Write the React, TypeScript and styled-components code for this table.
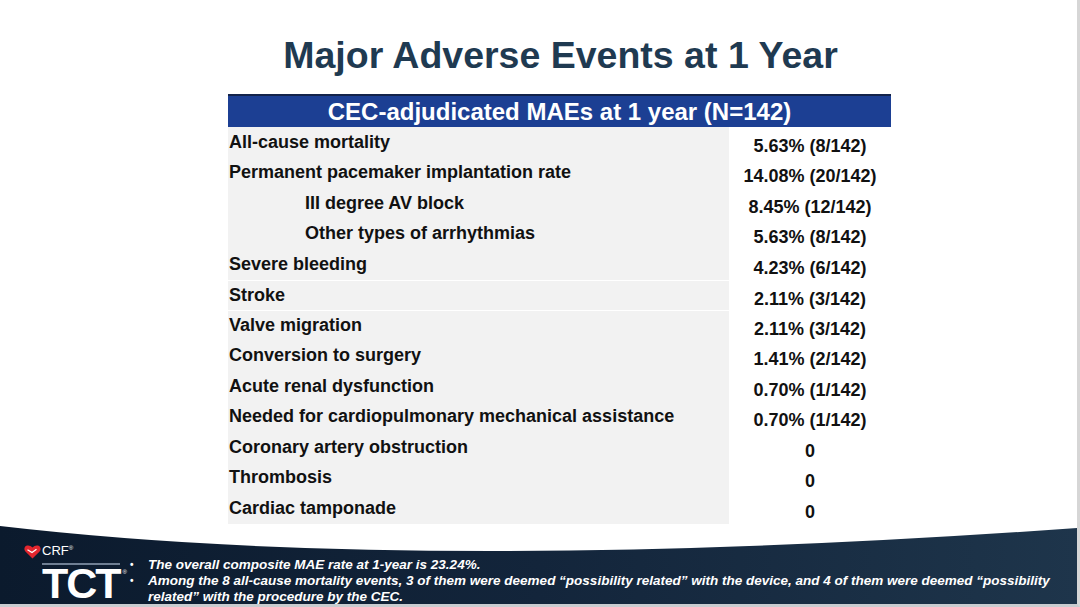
import React from 'react';
import styled, { createGlobalStyle } from 'styled-components';

const GlobalStyle = createGlobalStyle`
  html, body {
    margin: 0;
    padding: 0;
    background: #ffffff;
  }
  body {
    font-family: "Liberation Sans", Arial, sans-serif;
  }
`;

const rows = [
  { label: 'All-cause mortality', value: '5.63% (8/142)' },
  { label: 'Permanent pacemaker implantation rate', value: '14.08% (20/142)' },
  { label: 'III degree AV block', value: '8.45% (12/142)', indent: true },
  { label: 'Other types of arrhythmias', value: '5.63% (8/142)', indent: true },
  { label: 'Severe bleeding', value: '4.23% (6/142)' },
  { label: 'Stroke', value: '2.11% (3/142)', divider: true },
  { label: 'Valve migration', value: '2.11% (3/142)', divider: true },
  { label: 'Conversion to surgery', value: '1.41% (2/142)' },
  { label: 'Acute renal dysfunction', value: '0.70% (1/142)' },
  { label: 'Needed for cardiopulmonary mechanical assistance', value: '0.70% (1/142)' },
  { label: 'Coronary artery obstruction', value: '0' },
  { label: 'Thrombosis', value: '0' },
  { label: 'Cardiac tamponade', value: '0' },
];

const App = () => {
  return (
    <>
      <GlobalStyle />
      <Slide>
        <Title>Major Adverse Events at 1 Year</Title>
        <Table>
          <TableHeader>CEC-adjudicated MAEs at 1 year (N=142)</TableHeader>
          {rows.map((row) => (
            <Row key={row.label} $divider={row.divider}>
              <Label $indent={row.indent}>{row.label}</Label>
              <Value>{row.value}</Value>
            </Row>
          ))}
        </Table>
        <Footer>
          <Curve viewBox="0 0 1077 81" preserveAspectRatio="none">
            <path d="M0,0 L0,2 Q420,51 1077,4 L1077,0 Z" fill="#ffffff" />
          </Curve>
          <Logo>
            <CrfLine>
              <svg width="17" height="14" viewBox="0 0 17 14">
                <path
                  d="M8.5,13.5 L1.4,6.6 C-0.4,4.8 0.2,1.4 3,0.6 C5,0.1 7,1 8.5,2.6 C10,1 12,0.1 14,0.6 C16.8,1.4 17.4,4.8 15.6,6.6 Z"
                  fill="#e3262e"
                />
                <path d="M3.5,4.8 L8,7.5 L12.5,4.3" stroke="#ffffff" strokeWidth="1.3" fill="none" />
              </svg>
              <CrfText>
                CRF<Reg>®</Reg>
              </CrfText>
            </CrfLine>
            <TctLine>
              <TctText>TCT</TctText>
              <TctReg>®</TctReg>
            </TctLine>
          </Logo>
          <Notes>
            <Note>The overall composite MAE rate at 1-year is 23.24%.</Note>
            <Note>
              Among the 8 all-cause mortality events, 3 of them were deemed “possibility related” with the
              device, and 4 of them were deemed “possibility related” with the procedure by the CEC.
            </Note>
          </Notes>
        </Footer>
      </Slide>
    </>
  );
};

export default App;

// Styled components
const Slide = styled.div`
  width: 1077px;
  height: 604px;
  border-right: 3px solid #d6d6d6;
  border-bottom: 3px solid #c9ccd0;
  background: #ffffff;
  display: flex;
  flex-direction: column;
  overflow: hidden;
`;

const Title = styled.h1`
  margin: 34px 0 0;
  padding-left: 44px;
  text-align: center;
  font-size: 37.5px;
  line-height: 42px;
  font-weight: 700;
  color: #1f3a51;
`;

const Table = styled.div`
  margin: 18px 0 0 228px;
  width: 663px;
  display: flex;
  flex-direction: column;
`;

const TableHeader = styled.div`
  height: 30px;
  border-top: 2px solid #13234a;
  background: #1c3f93;
  color: #ffffff;
  font-size: 24px;
  font-weight: 700;
  display: flex;
  align-items: center;
  justify-content: center;
  padding-top: 1px;
`;

const Row = styled.div<{ $divider?: boolean }>`
  display: grid;
  grid-template-columns: 501px 1fr;
  height: 30.5px;
  box-sizing: border-box;
  border-top: ${(p) => (p.$divider ? '1px solid #ffffff' : '0')};
`;

const Label = styled.div<{ $indent?: boolean }>`
  background: #f2f2f2;
  font-size: 18px;
  font-weight: 700;
  color: #111111;
  padding-left: ${(p) => (p.$indent ? '77px' : '1px')};
  display: flex;
  align-items: center;
  white-space: nowrap;
`;

const Value = styled.div`
  font-size: 18px;
  font-weight: 700;
  color: #111111;
  display: flex;
  align-items: center;
  justify-content: center;
  padding-top: 8px;
  white-space: nowrap;
`;

const Footer = styled.div`
  position: relative;
  flex-shrink: 0;
  margin-top: auto;
  width: 100%;
  height: 81px;
  background: linear-gradient(90deg, #0b1a2d 0%, #13253b 50%, #1e354b 100%);
  display: flex;
  align-items: flex-start;
  padding: 17px 0 0 24px;
  box-sizing: border-box;
`;

const Curve = styled.svg`
  position: absolute;
  left: 0;
  top: 0;
  width: 100%;
  height: 81px;
`;

const Logo = styled.div`
  position: relative;
  width: 94px;
  margin-top: 3px;
  display: flex;
  flex-direction: column;
  align-items: flex-start;
`;

const CrfLine = styled.div`
  display: flex;
  align-items: center;
  gap: 1px;
  height: 16px;
`;

const CrfText = styled.span`
  color: #ffffff;
  font-size: 13px;
  font-weight: 400;
  line-height: 14px;
`;

const Reg = styled.span`
  position: relative;
  top: -5px;
  font-size: 6px;
`;

const TctLine = styled.div`
  display: flex;
  align-items: flex-start;
  margin-left: 18px;
  margin-top: 3px;
`;

const TctText = styled.span`
  padding-top: 1px;
  border-top: 2px solid #6f7f93;
  color: #ffffff;
  font-size: 43px;
  line-height: 34px;
  font-weight: 700;
  letter-spacing: -2px;
`;

const TctReg = styled.span`
  margin: 6px 0 0 3px;
  color: #ffffff;
  font-size: 6px;
`;

const Notes = styled.ul`
  position: relative;
  margin: 16px 0 0;
  padding: 0 0 0 30px;
  width: 930px;
`;

const Note = styled.li`
  color: #ffffff;
  font-size: 13.5px;
  line-height: 16px;
  font-weight: 700;
  font-style: italic;
  list-style: none;
  position: relative;

  &::before {
    content: '•';
    position: absolute;
    left: -18px;
    font-style: normal;
    font-size: 10px;
  }
`;
